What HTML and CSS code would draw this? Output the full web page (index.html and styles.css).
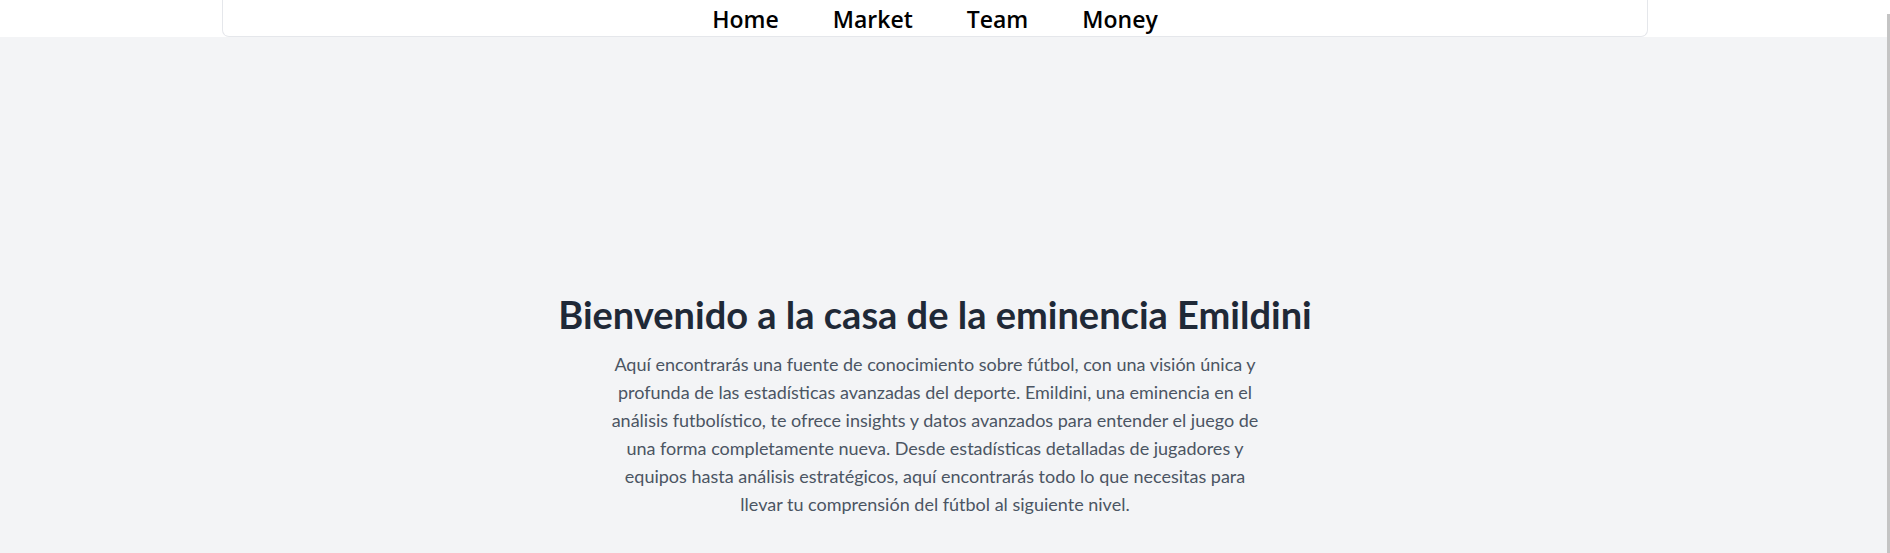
FILE: index.html
```html
<!DOCTYPE html>
<html lang="es">
<head>
<meta charset="utf-8">
<title>Emildini</title>
<link rel="stylesheet" href="styles.css">
</head>
<body>
<header class="topbar">
  <nav class="nav-card">
    <a class="nav-link" href="#">Home</a>
    <a class="nav-link" href="#">Market</a>
    <a class="nav-link" href="#">Team</a>
    <a class="nav-link" href="#">Money</a>
  </nav>
</header>
<main class="hero">
  <h1 class="hero-title">Bienvenido a la casa de la eminencia Emildini</h1>
  <p class="hero-text">Aquí encontrarás una fuente de conocimiento sobre fútbol, con una visión única y profunda de las estadísticas avanzadas del deporte. Emildini, una eminencia en el análisis futbolístico, te ofrece insights y datos avanzados para entender el juego de una forma completamente nueva. Desde estadísticas detalladas de jugadores y equipos hasta análisis estratégicos, aquí encontrarás todo lo que necesitas para llevar tu comprensión del fútbol al siguiente nivel.</p>
</main>
<div class="scroll-thumb"></div>
</body>
</html>
```
FILE: styles.css
```css
html, body {
  margin: 0;
  padding: 0;
}
body {
  background: #f3f4f6;
  font-family: "Open Sans", "Noto Sans", sans-serif;
  min-height: 553px;
}
.topbar {
  background: #ffffff;
  height: 37px;
  padding: 0 242px 0 222px;
  display: flex;
}
.nav-card {
  flex: 1;
  display: flex;
  justify-content: center;
  align-items: center;
  gap: 54px;
  border: 1px solid #e5e7eb;
  border-top: none;
  border-radius: 0 0 7px 7px;
  box-sizing: border-box;
  height: 37px;
}
.nav-link {
  color: #000;
  text-decoration: none;
  font-size: 23px;
  font-weight: 600;
  line-height: 32px;
  padding-top: 2px;
}
.hero {
  display: flex;
  flex-direction: column;
  align-items: center;
  padding: 257px 20px 0 0;
  font-family: Lato, "Open Sans", sans-serif;
}
.hero-title {
  margin: 0 0 16px;
  font-size: 38px;
  line-height: 40px;
  font-weight: 700;
  color: #1f2937;
}
.hero-text {
  margin: 0;
  max-width: 656px;
  text-align: center;
  font-size: 18px;
  line-height: 28px;
  color: #4b5563;
}
.scroll-thumb {
  position: fixed;
  right: 0;
  top: 14px;
  bottom: 0;
  width: 3px;
  background: #c4c4c4;
}
```
